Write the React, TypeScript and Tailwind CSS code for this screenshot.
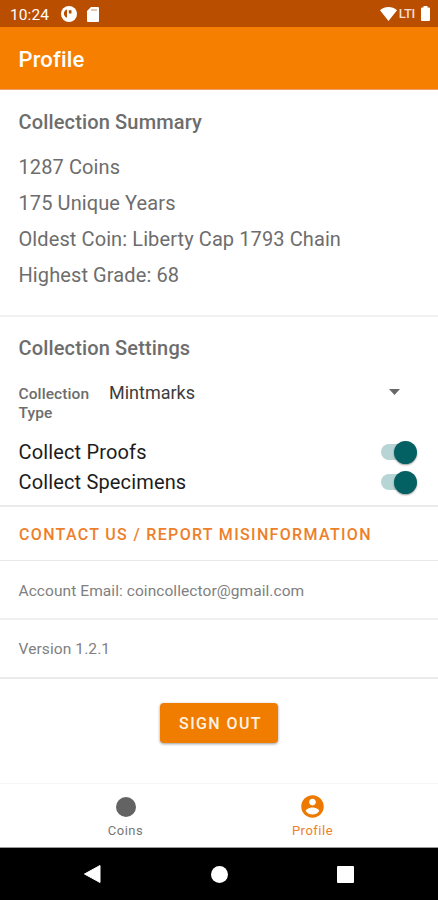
const SUMMARY = ['1287 Coins', '175 Unique Years', 'Oldest Coin: Liberty Cap 1793 Chain', 'Highest Grade: 68'];

const SWITCHES = ['Collect Proofs', 'Collect Specimens'];

function StatusBar() {
  return (
    <div className="flex h-[27px] shrink-0 items-center bg-[#b94d00] pl-[10px] pr-[8px] text-white">
      <span className="pt-[3px] text-[15.5px] leading-[24px] tracking-[0.1px]">10:24</span>
      <svg className="ml-[12px] mt-px h-[16px] w-[16px]" viewBox="0 0 16 16">
        <circle cx="8" cy="8" r="8" fill="#fff" />
        <path d="M6 3.5v8.3C3.8 10.8 2.700 9 2.900 7.200 3 5.500 4.200 4.100 6 3.500z" fill="#b94d00" />
        <path d="M7.800 4.200h2.700v3.300H7.800z" fill="#b94d00" />
      </svg>
      <svg className="ml-[10px] mt-px h-[15px] w-[12px]" viewBox="0 0 12 15">
        <path d="M4 0h7a1 1 0 0 1 1 1v13a1 1 0 0 1-1 1H1a1 1 0 0 1-1-1V4z" fill="#fff" />
        <path d="M5 2v2M7 2v2M9 2v2" stroke="#d08a5c" strokeWidth="1" />
      </svg>
      <svg className="ml-auto h-[14px] w-[17px]" viewBox="0 0 17 14">
        <path d="M0 3.2C5-1 12-1 17 3.2L8.5 14z" fill="#fff" />
      </svg>
      <span className="ml-[2px] text-[13px] font-medium leading-[27px] tracking-[-0.3px] text-[#f8dccb]">LTI</span>
      <svg className="ml-[6px] h-[15px] w-[9px]" viewBox="0 0 9 15">
        <path d="M2.5 0h4v1.500H8a1 1 0 0 1 1 1V14a1 1 0 0 1-1 1H1a1 1 0 0 1-1-1V2.500a1 1 0 0 1 1-1h1.500z" fill="#fff" />
      </svg>
    </div>
  );
}

function Switch() {
  return (
    <div className="flex h-[16px] w-[35px] items-center justify-end rounded-full bg-[#b8d5d5]">
      <div className="-mr-px h-[23px] w-[23px] shrink-0 rounded-full bg-[#036063] shadow-[0_1px_2px_rgba(0,0,0,0.4)]" />
    </div>
  );
}

export default function App() {
  return (
    <div className="flex h-[900px] w-[438px] flex-col overflow-hidden whitespace-nowrap bg-white font-[Roboto,sans-serif] text-[#6d6d6d]">
      <StatusBar />
      <header className="flex h-[63px] shrink-0 items-center border-b border-[#f0a070] bg-[#f77f00] px-[18.5px] pt-[3px]">
        <h1 className="text-[22px] font-medium tracking-[0.15px] text-white">Profile</h1>
      </header>

      <section className="h-[227px] shrink-0 border-b-2 border-[#f1f1f1] px-[18.5px] pt-[14px]">
        <h2 className="text-[20px] font-medium leading-[36px] tracking-[0.15px]">Collection Summary</h2>
        <div className="mt-[9px] text-[20px] leading-[36px] tracking-[0.1px]">
          {SUMMARY.map((line) => (
            <p key={line}>{line}</p>
          ))}
        </div>
      </section>

      <section className="h-[190px] shrink-0 border-b-2 border-[#ebebeb] pl-[18.5px] pr-[22px] pt-[13px]">
        <h2 className="text-[20px] font-medium leading-[36px] tracking-[0.15px]">Collection Settings</h2>
        <div className="mt-[18px] flex h-[38px]">
          <div className="w-[90.5px] pt-px text-[15.5px] font-medium leading-[19px] tracking-[0.1px]">
            Collection
            <br />
            Type
          </div>
          <span className="text-[18px] leading-[18px] text-[#3c3c3c]">Mintmarks</span>
          <svg className="ml-auto mr-[16px] mt-[5px] h-[6px] w-[11px]" viewBox="0 0 11 6">
            <path d="M0 0h11L5.5 6z" fill="#686868" />
          </svg>
        </div>
        <div className="mt-[15px]">
          {SWITCHES.map((label) => (
            <div key={label} className="flex h-[30px] items-center justify-between text-[#1c1c1c]">
              <span className="pt-px text-[20px] leading-[29px] tracking-[0.15px]">{label}</span>
              <Switch />
            </div>
          ))}
        </div>
      </section>

      <div className="flex h-[54px] shrink-0 items-center border-b border-[#e8e8e8] px-[19px] pt-[3px] text-[16px] font-medium tracking-[1.33px] text-[#ee7f2a]">
        CONTACT US / REPORT MISINFORMATION
      </div>
      <div className="flex h-[59px] shrink-0 items-center border-b-2 border-[#f0f0f0] px-[18.5px] pt-[5px] text-[15.5px] tracking-[0.07px] text-[#808080]">
        Account Email: coincollector@gmail.com
      </div>
      <div className="flex h-[59px] shrink-0 items-center border-b-2 border-[#ebebeb] px-[18.5px] pt-[3px] text-[15.5px] tracking-[0.1px] text-[#808080]">
        Version 1.2.1
      </div>

      <div className="flex h-[104px] shrink-0 justify-center pt-[24px]">
        <button className="h-[40px] w-[118px] rounded-[4px] bg-[#f17d00] pl-[3px] pt-[2px] text-[16px] font-medium tracking-[1.4px] text-[#fff3e6] shadow-[0_1px_3px_rgba(0,0,0,0.4)]">
          SIGN OUT
        </button>
      </div>

      <nav className="flex h-[65px] shrink-0 border-b border-t border-b-[#999] border-t-[#f5f5f5] px-[32px] text-[13px] leading-[16px]">
        <div className="flex flex-1 flex-col items-center pt-[13px] text-[#777]">
          <div className="h-[20px] w-[20px] rounded-full bg-[#636363]" />
          <span className="mt-[6px] tracking-[0.5px]">Coins</span>
        </div>
        <div className="flex flex-1 flex-col items-center pt-[9px] text-[#ee7f2a]">
          <svg className="h-[27px] w-[27px]" viewBox="0 0 24 24" fill="#ed7900">
            <path d="M12 2C6.480 2 2 6.480 2 12s4.480 10 10 10 10-4.480 10-10S17.520 2 12 2zm0 3c1.660 0 3 1.340 3 3s-1.340 3-3 3-3-1.340-3-3 1.340-3 3-3zm0 14.200c-2.500 0-4.710-1.280-6-3.220.030-1.990 4-3.080 6-3.080 1.990 0 5.970 1.090 6 3.080-1.290 1.940-3.500 3.220-6 3.220z" />
          </svg>
          <span className="mt-[3px] tracking-[0.5px]">Profile</span>
        </div>
      </nav>

      <div className="flex h-[52px] shrink-0 items-center justify-between bg-black px-[84px]">
        <svg className="h-[18px] w-[17px]" viewBox="0 0 17 18">
          <path d="M0.5 9L16 0.5v17z" fill="#fff" stroke="#fff" strokeLinejoin="round" />
        </svg>
        <div className="h-[17px] w-[17px] rounded-full bg-white" />
        <div className="h-[17px] w-[17px] rounded-[1px] bg-white" />
      </div>
    </div>
  );
}
